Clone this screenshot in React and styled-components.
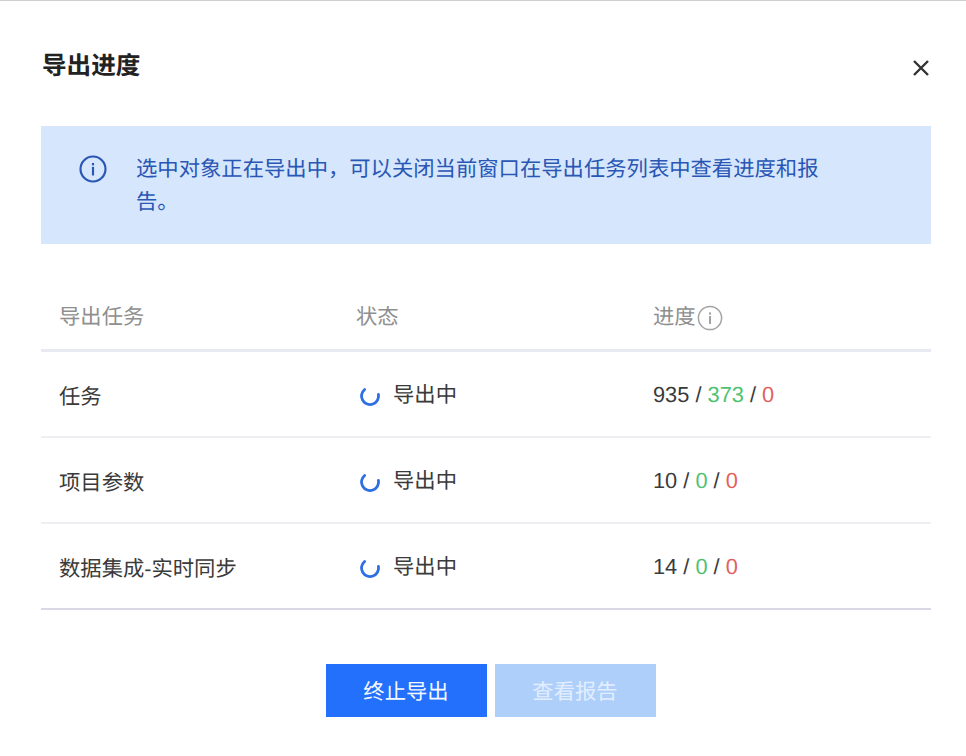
import React from "react";
import styled, { createGlobalStyle } from "styled-components";

const GlobalStyle = createGlobalStyle`
  html, body {
    margin: 0;
    padding: 0;
    background: #fff;
  }
  body {
    font-family: "Liberation Sans", "Noto Sans CJK SC", sans-serif;
    text-rendering: geometricPrecision;
    text-spacing-trim: space-all;
  }
`;

const tasks = [
  { name: "任务", total: 935, ok: 373, fail: 0 },
  { name: "项目参数", total: 10, ok: 0, fail: 0 },
  { name: "数据集成-实时同步", total: 14, ok: 0, fail: 0 },
];

const InfoIcon = ({ size, color, width }) => (
  <svg width={size} height={size} viewBox="0 0 26 26" fill="none">
    <circle cx="13" cy="13" r="11.6" stroke={color} strokeWidth={width} />
    <rect x="12" y="11" width="2" height="8" fill={color} />
    <rect x="12" y="7.4" width="2" height="2.2" fill={color} />
  </svg>
);

const Spinner = () => (
  <svg width="20" height="20" viewBox="0 0 20 20" fill="none">
    <path
      d="M4.6 3.5 A8.5 8.5 0 1 0 18.4 8.5"
      stroke="#2f6fe4"
      strokeWidth="2.8"
      strokeLinecap="round"
    />
  </svg>
);

const App = () => {
  return (
    <Page>
      <GlobalStyle />
      <Header>
        <Title>导出进度</Title>
        <CloseButton>
          <svg width="18" height="18" viewBox="0 0 18 18" fill="none">
            <path d="M2 2 L16 16 M16 2 L2 16" stroke="#333" strokeWidth="2.4" />
          </svg>
        </CloseButton>
      </Header>

      <Alert>
        <AlertIcon>
          <InfoIcon size={28} color="#2a56b4" width={2} />
        </AlertIcon>
        <AlertText>
          选中对象正在导出中，可以关闭当前窗口在导出任务列表中查看进度和报告。
        </AlertText>
      </Alert>

      <Table>
        <HeadRow>
          <HeadCell>导出任务</HeadCell>
          <HeadCell>状态</HeadCell>
          <HeadCell>
            进度
            <InfoIcon size={26} color="#a3a3a3" width={1.5} />
          </HeadCell>
        </HeadRow>
        {tasks.map((t) => (
          <Row key={t.name}>
            <Cell>{t.name}</Cell>
            <StatusCell>
              <Spinner />
              <span>导出中</span>
            </StatusCell>
            <NumCell>
              {t.total} / <Num $color="#4fc26f">{t.ok}</Num> /{" "}
              <Num $color="#e2605c">{t.fail}</Num>
            </NumCell>
          </Row>
        ))}
      </Table>

      <Footer>
        <Button $primary>终止导出</Button>
        <Button>查看报告</Button>
      </Footer>
    </Page>
  );
};

export default App;

const Page = styled.div`
  width: 966px;
  height: 756px;
  box-sizing: border-box;
  border-top: 1px solid #cfcfcf;
  padding: 0 35px 0 41px;
  background: #fff;
  overflow: hidden;
`;

const Header = styled.div`
  height: 125px;
  display: flex;
  justify-content: space-between;
  padding-top: 48px;
  box-sizing: border-box;
`;

const Title = styled.div`
  font-size: 24.6px;
  line-height: 36px;
  font-weight: 700;
  color: #222;
  height: 36px;
  padding-left: 1px;
`;

const CloseButton = styled.div`
  width: 18px;
  height: 18px;
  margin-top: 10px;
  margin-right: 1px;
`;

const Alert = styled.div`
  height: 118px;
  box-sizing: border-box;
  background: #d5e6fd;
  display: flex;
  padding: 27px 110px 0 38px;
`;

const AlertIcon = styled.div`
  flex: none;
  width: 57px;
  height: 28px;
  padding-top: 2px;
`;

const AlertText = styled.div`
  font-size: 21.33px;
  line-height: 33px;
  color: #2a56b4;
`;

const Table = styled.div`
  margin-top: 41px;
`;

const HeadRow = styled.div`
  display: grid;
  grid-template-columns: 297px 297px 296px;
  height: 64px;
  border-bottom: 3px solid #e8eaf2;
`;

const HeadCell = styled.div`
  display: flex;
  align-items: center;
  gap: 1px;
  padding: 0 0 3px 18px;
  font-size: 21.33px;
  color: #8f8f8f;

  svg {
    position: relative;
    top: 2px;
  }
`;

const Row = styled.div`
  display: grid;
  grid-template-columns: 297px 297px 296px;
  height: 84px;
  border-bottom: 2px solid #eeeff3;

  &:last-child {
    border-bottom-color: #d9d9e6;
  }
`;

const Cell = styled.div`
  display: flex;
  align-items: center;
  padding: 1px 0 0 18px;
  font-size: 21.33px;
  color: #3a3a3a;
`;

const StatusCell = styled(Cell)`
  gap: 13px;
  svg {
    margin-left: 4px;
    position: relative;
    top: 1px;
  }
  span {
    position: relative;
    top: -2px;
  }
`;

const NumCell = styled(Cell)`
  display: block;
  font-size: 21.8px;
  line-height: 84px;
  white-space: pre;
`;

const Num = styled.span`
  color: ${(p) => p.$color};
`;

const Footer = styled.div`
  display: flex;
  justify-content: center;
  gap: 8px;
  margin-top: 54px;
  padding-left: 9px;
`;

const Button = styled.div`
  width: 161px;
  height: 53px;
  display: flex;
  align-items: center;
  justify-content: center;
  font-size: 21.33px;
  color: ${(p) => (p.$primary ? "#f4f8ff" : "#e2eeff")};
  background: ${(p) => (p.$primary ? "#2270fb" : "#afcffb")};
`;
